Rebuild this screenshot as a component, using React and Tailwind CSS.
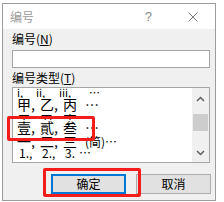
import React from "react";

const cjk = { fontFamily: '"Noto Sans CJK SC", "Noto Sans", sans-serif' };

function Cell({ w, children, className = "" }) {
  return (
    <span className={`inline-block ${className}`} style={{ width: w }}>
      {children}
    </span>
  );
}

function Row({ h, lead, size, children }) {
  return (
    <div
      className="shrink-0 overflow-hidden bg-white whitespace-nowrap pl-[4px] text-black"
      style={{ height: h, lineHeight: lead + "px", fontSize: size }}
    >
      <div style={{ height: lead }}>{children}</div>
    </div>
  );
}

export default function App() {
  return (
    <div className="w-[224px] h-[202px] bg-white pt-[3px] pl-[2px]" style={cjk}>
      <div className="relative w-[214px] h-[198px] border border-[#9c9c9c] flex flex-col bg-[#f0f0f0]">
        {/* title bar */}
        <div className="h-[25px] bg-white flex items-center shrink-0">
          <span className="ml-[7px] text-[12px] text-[#9a9a9a]">编号</span>
          <span className="ml-auto mr-[36px] text-[13px] text-[#8a8a8a]" style={{ fontFamily: '"Liberation Sans", sans-serif' }}>?</span>
          <svg width="10" height="10" viewBox="0 0 10 10" className="mr-[17px]">
            <path d="M0.5 0.5 L9.5 9.5 M9.5 0.5 L0.5 9.5" stroke="#7a7a7a" strokeWidth="1" />
          </svg>
        </div>

        {/* body */}
        <div className="flex flex-col pl-[9px]">
          <div className="mt-[2px] h-[16px] text-[12px] leading-[16px] text-black">
            编号<span>(</span><span className="underline">N</span><span>)</span>
          </div>
          <div className="mt-[3px] w-[198px] h-[18px] bg-white border border-[#a5a5a5]" />
          <div className="mt-[2px] h-[16px] text-[12px] leading-[16px] text-black">
            编号类型<span>(</span><span className="underline">T</span><span>)</span>
          </div>

          {/* list box */}
          <div className="mt-[1px] w-[198px] h-[76px] bg-white border border-[#a5a5a5] flex">
            <div className="flex-1 flex flex-col overflow-hidden">
              <Row h={10} lead={8} size={11}>
                <Cell w={19}>i,</Cell>
                <Cell w={23}>ii,</Cell>
                <Cell w={30}>iii,</Cell>
                <span>…</span>
              </Row>
              <Row h={16} lead={13} size={14}>
                <Cell w={23}>甲,</Cell>
                <Cell w={23}>乙,</Cell>
                <Cell w={22}>丙</Cell>
                <span>…</span>
              </Row>
              <Row h={6} lead={12} size={14}>
                <Cell w={23}>子,</Cell>
                <Cell w={23}>丑,</Cell>
                <Cell w={22}>寅</Cell>
                <span>…</span>
              </Row>
              <Row h={16} lead={14} size={14}>
                <Cell w={23}>壹,</Cell>
                <Cell w={23}>貳,</Cell>
                <Cell w={22}>叁</Cell>
                <span>…</span>
              </Row>
              <Row h={13} lead={10} size={14}>
                <Cell w={23}>一,</Cell>
                <Cell w={23}>二,</Cell>
                <Cell w={22}>三</Cell>
                <span className="text-[12px]">(简)…</span>
              </Row>
              <Row h={12} lead={8} size={12}>
                <Cell w={25} className="pl-[2px]">1.,</Cell>
                <Cell w={23}>2.,</Cell>
                <Cell w={14}>3.</Cell>
                <span>…</span>
              </Row>
            </div>
            {/* scrollbar */}
            <div className="w-[17px] bg-[#f0f0f0] flex flex-col items-center">
              <svg width="9" height="6" viewBox="0 0 9 6" className="mt-[8px]">
                <path d="M1 5 L4.5 1.5 L8 5" stroke="#606060" strokeWidth="1.5" fill="none" />
              </svg>
              <div className="mt-[12px] w-[15px] h-[17px] bg-[#cdcdcd]" />
              <svg width="9" height="6" viewBox="0 0 9 6" className="mt-auto mb-[6px]">
                <path d="M1 1 L4.5 4.5 L8 1" stroke="#606060" strokeWidth="1.5" fill="none" />
              </svg>
            </div>
          </div>

          {/* buttons */}
          <div className="mt-[11px] flex gap-[10px] pl-[39px]">
            <button className="w-[75px] h-[20px] bg-[#e1e1e1] border-2 border-[#0078d7] text-[12px] leading-[16px] text-black">
              确定
            </button>
            <button className="w-[75px] h-[20px] bg-[#e1e1e1] border border-[#adadad] text-[12px] leading-[18px] text-black">
              取消
            </button>
          </div>
        </div>

        {/* red annotation boxes */}
        <div className="absolute left-[4px] top-[112px] w-[88px] h-[25px] border-[3px] border-[#f51c1c] rounded-[2px]" />
        <div className="absolute left-[40px] top-[164px] w-[98px] h-[29px] border-[3px] border-[#f51c1c] rounded-[2px]" />
      </div>
    </div>
  );
}
